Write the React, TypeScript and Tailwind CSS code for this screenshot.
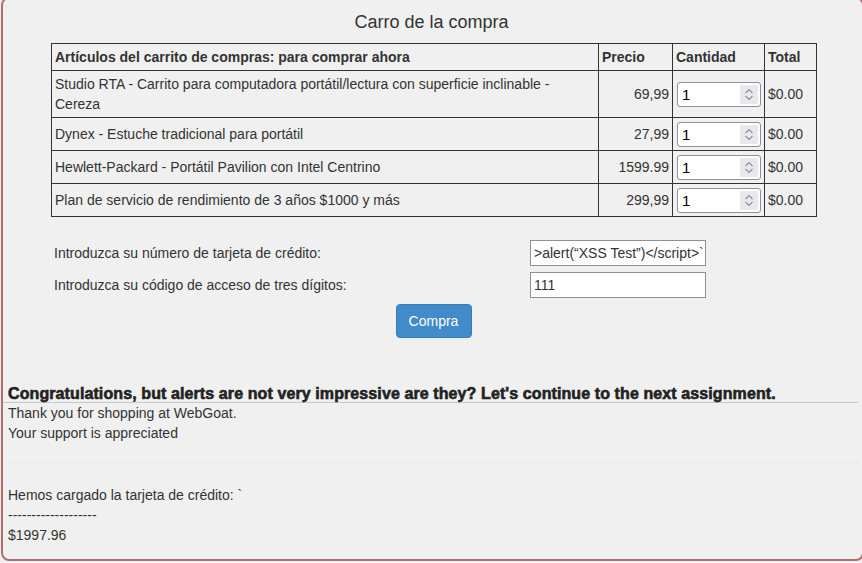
const items = [
  { name: "Studio RTA - Carrito para computadora portátil/lectura con superficie inclinable - Cereza", price: "69,99", tall: true },
  { name: "Dynex - Estuche tradicional para portátil", price: "27,99" },
  { name: "Hewlett-Packard - Portátil Pavilion con Intel Centrino", price: "1599.99" },
  { name: "Plan de servicio de rendimiento de 3 años $1000 y más", price: "299,99" },
];

const QtyInput = () => (
  <div className="flex h-[25px] w-[84px] shrink-0 items-center rounded-[3px] border border-[#8f8f9d] bg-white pl-[4px] pr-[2px]">
    <span className="flex-1 text-[15px] leading-none text-black">1</span>
    <div className="flex h-[19px] w-[18px] flex-col items-center justify-center gap-[1px] bg-[#e9e9ed]">
      <svg width="10" height="6" viewBox="0 0 10 6" fill="none">
        <path d="M1.5 5 L5 1.5 L8.5 5" stroke="#8f8f9d" strokeWidth="1.2" />
      </svg>
      <svg width="10" height="6" viewBox="0 0 10 6" fill="none">
        <path d="M1.5 1 L5 4.5 L8.5 1" stroke="#8f8f9d" strokeWidth="1.2" />
      </svg>
    </div>
  </div>
);

const App = () => {
  return (
    <div className="h-screen w-full overflow-hidden bg-[#f0f0f0] font-['Liberation_Sans',Arial,sans-serif] text-[14px] text-[#333]">
      <div className="-mt-[3px] ml-[1px] h-[564px] w-[863px] rounded-[8px] border-2 border-[#b36b6b] bg-[#f0f0f0] pt-[12px]">
        <h2 className="ml-[-2px] text-center text-[18px] leading-[22px]">Carro de la compra</h2>

        <table className="ml-[48px] mt-[10px] w-[765px] table-fixed border-collapse">
          <colgroup>
            <col className="w-[547px]" />
            <col className="w-[74px]" />
            <col className="w-[92px]" />
            <col className="w-[52px]" />
          </colgroup>
          <thead>
            <tr className="h-[27px]">
              <th className="border border-[#333] px-[3px] text-left font-bold">Artículos del carrito de compras: para comprar ahora</th>
              <th className="border border-[#333] px-[3px] text-left font-bold">Precio</th>
              <th className="border border-[#333] px-[3px] text-left font-bold">Cantidad</th>
              <th className="border border-[#333] px-[3px] text-left font-bold">Total</th>
            </tr>
          </thead>
          <tbody>
            {items.map((it) => (
              <tr key={it.name} className={it.tall ? "h-[47px]" : "h-[33px]"}>
                <td className="border border-[#333] px-[3px] leading-[20px]">{it.name}</td>
                <td className="border border-[#333] px-[3px] text-right">{it.price}</td>
                <td className="border border-[#333] px-[4px]">
                  <QtyInput />
                </td>
                <td className="border border-[#333] px-[3px]">$0.00</td>
              </tr>
            ))}
          </tbody>
        </table>

        <div className="ml-[51px] mt-[23px] flex w-[652px] flex-col gap-[6px]">
          <div className="flex items-center justify-between">
            <span>Introduzca su número de tarjeta de crédito:</span>
            <div className="flex h-[26px] w-[176px] items-center overflow-hidden whitespace-nowrap border border-[#8f8f9d] bg-white px-[3px]">
              &gt;alert(“XSS Test”)&lt;/script&gt;`
            </div>
          </div>
          <div className="flex items-center justify-between">
            <span>Introduzca su código de acceso de tres dígitos:</span>
            <div className="flex h-[26px] w-[176px] items-center border border-[#8f8f9d] bg-white px-[3px]">111</div>
          </div>
        </div>

        <div className="mt-[6px] flex justify-center pl-[2px]">
          <button className="h-[34px] w-[76px] rounded-[4px] border border-[#357ebd] bg-[#428bca] text-[14px] text-white">
            Compra
          </button>
        </div>

        <div className="mt-[47px] pl-[5px]">
          <h3 className="text-[16px] font-bold leading-[17px] tracking-[0.1px] text-[#222] [-webkit-text-stroke:0.6px_#222]">
            Congratulations, but alerts are not very impressive are they? Let's continue to the next assignment.
          </h3>
        </div>
        <hr className="mr-[4px] border-t border-[#c8c8c8]" />
        <div className="pl-[5px] leading-[20px]">
          <p>Thank you for shopping at WebGoat.</p>
          <p>Your support is appreciated</p>
        </div>
        <hr className="mr-[4px] mt-[19px] border-t border-[#e8e8e8]" />
        <div className="mt-[22px] pl-[5px] leading-[20px]">
          <p>Hemos cargado la tarjeta de crédito: `</p>
          <p>-------------------</p>
          <p>$1997.96</p>
        </div>
      </div>
    </div>
  );
};

export default App;
